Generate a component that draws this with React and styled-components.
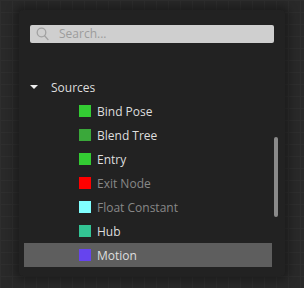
import React from "react";
import styled, { createGlobalStyle } from "styled-components";

const GlobalStyle = createGlobalStyle`
  html, body {
    margin: 0;
    padding: 0;
    width: 304px;
    height: 288px;
    overflow: hidden;
    background-color: #292929;
    background-image:
      linear-gradient(#2e2e2e 1px, transparent 1px),
      linear-gradient(90deg, #2e2e2e 1px, transparent 1px);
    background-size: 12px 12px;
    font-family: "Open Sans", "Noto Sans", sans-serif;
  }
`;

const Stage = styled.div`
  padding: 10px 0 0 19px;
`;

const Panel = styled.div`
  width: 266px;
  height: 266px;
  box-sizing: border-box;
  background: #222222;
  border-radius: 4px;
  box-shadow: 0 0 10px 4px rgba(0, 0, 0, 0.35);
  padding: 15px 0 0 5px;
`;

const SearchBox = styled.div`
  margin-left: 6px;
  width: 244px;
  height: 18px;
  background: #cfcfcf;
  border-radius: 2px;
  display: flex;
  align-items: center;
  gap: 10px;
  padding-left: 6px;
  box-sizing: border-box;
`;

const SearchText = styled.span`
  font-size: 12px;
  color: #9c9c9c;
  line-height: 18px;
`;

const Body = styled.div`
  margin-top: 32px;
  display: flex;
`;

const Rows = styled.div`
  width: 248px;
  display: flex;
  flex-direction: column;
`;

const Row = styled.div`
  height: 24px;
  display: flex;
  align-items: center;
  padding-left: ${(p) => p.$indent}px;
  background: ${(p) => (p.$selected ? "#5e5e5e" : "transparent")};
  font-size: 12px;
  color: ${(p) => (p.$disabled ? "#888888" : "#dedede")};
`;

const Caret = styled.span`
  width: 0;
  height: 0;
  border-left: 4px solid transparent;
  border-right: 4px solid transparent;
  border-top: 4px solid #eeeeee;
  margin-right: 13px;
`;

const Swatch = styled.span`
  width: 12px;
  height: 12px;
  background: ${(p) => p.$color};
  margin-right: 6px;
`;

const Track = styled.div`
  width: 4px;
  margin-left: 2px;
`;

const Thumb = styled.div`
  margin-top: 62px;
  height: 80px;
  background: #8a8a8a;
  border-radius: 2px;
`;

const items = [
  { name: "Bind Pose", color: "#33cc33" },
  { name: "Blend Tree", color: "#3aa83a" },
  { name: "Entry", color: "#33cc33" },
  { name: "Exit Node", color: "#ff0000", disabled: true },
  { name: "Float Constant", color: "#80ffff", disabled: true },
  { name: "Hub", color: "#33c494" },
  { name: "Motion", color: "#6644ee", selected: true },
];

const SearchIcon = () => (
  <svg width="13" height="14" viewBox="0 0 13 14" fill="none">
    <circle cx="5.5" cy="5.5" r="4.3" stroke="#a2a2a2" strokeWidth="1.3" />
    <path d="M8.6 8.8 L12 12.6" stroke="#a2a2a2" strokeWidth="1.4" strokeLinecap="round" />
  </svg>
);

export default function App() {
  return (
    <>
      <GlobalStyle />
      <Stage>
        <Panel>
          <SearchBox>
            <SearchIcon />
            <SearchText>Search...</SearchText>
          </SearchBox>
          <Body>
            <Rows>
              <Row $indent={6}>
                <Caret />
                Sources
              </Row>
              {items.map((it) => (
                <Row
                  key={it.name}
                  $indent={55}
                  $disabled={it.disabled}
                  $selected={it.selected}
                >
                  <Swatch $color={it.color} />
                  {it.name}
                </Row>
              ))}
            </Rows>
            <Track>
              <Thumb />
            </Track>
          </Body>
        </Panel>
      </Stage>
    </>
  );
}
